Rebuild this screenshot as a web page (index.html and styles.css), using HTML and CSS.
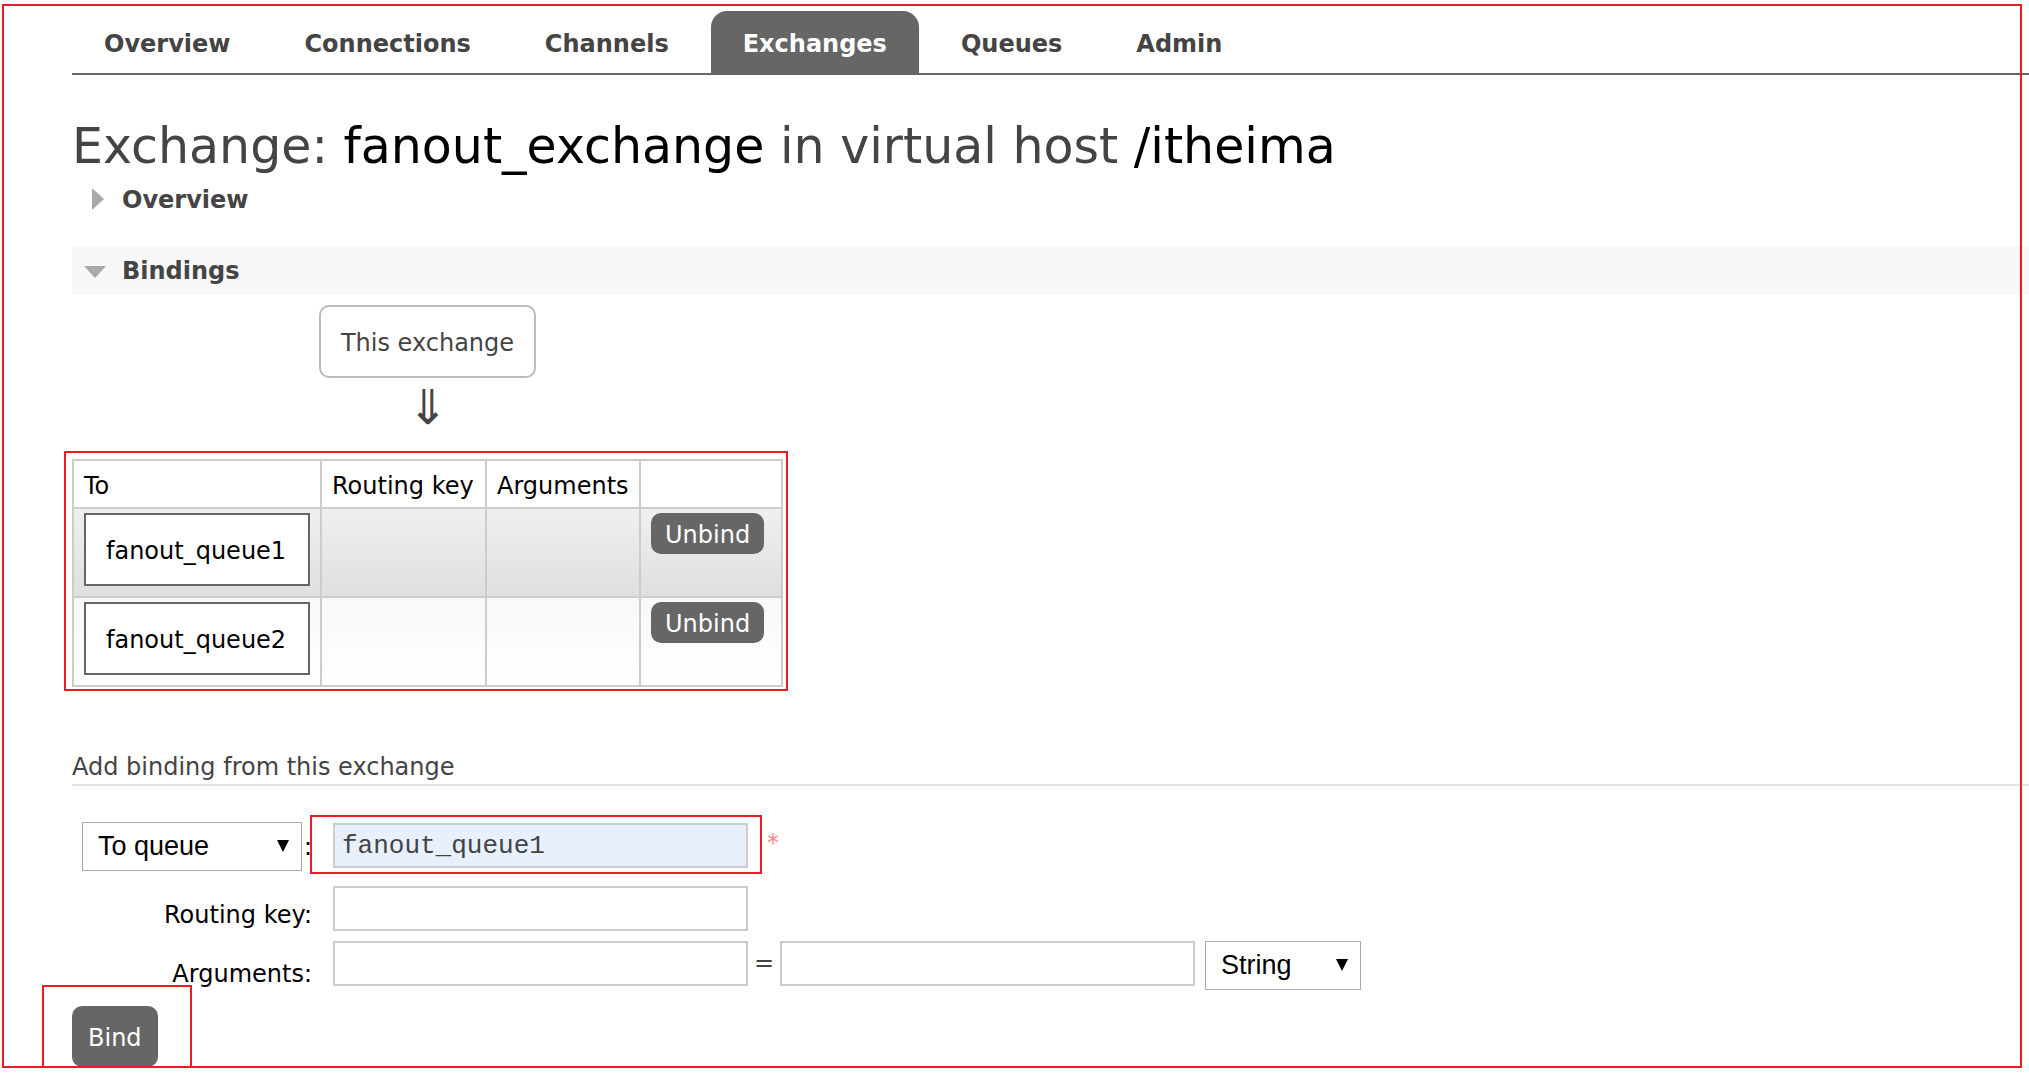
FILE: index.html
```html
<!DOCTYPE html>
<html lang="en">
<head>
<meta charset="utf-8">
<title>Exchange: fanout_exchange</title>
<link rel="stylesheet" href="styles.css">
</head>
<body>
<div class="page">
  <nav class="tabs">
    <a class="tab" href="#overview">Overview</a>
    <a class="tab" href="#connections">Connections</a>
    <a class="tab" href="#channels">Channels</a>
    <a class="tab tab-selected" href="#exchanges">Exchanges</a>
    <a class="tab" href="#queues">Queues</a>
    <a class="tab" href="#admin">Admin</a>
  </nav>
  <main>
    <h1>Exchange: <b>fanout_exchange</b> in virtual host <b>/itheima</b></h1>
    <h2 class="section">
      <svg class="marker" viewBox="0 0 24 24" aria-hidden="true"><path d="M9 0L21 11L9 22Z"/></svg>
      Overview
    </h2>
    <h2 class="section section-open">
      <svg class="marker" viewBox="0 0 24 24" aria-hidden="true"><path d="M1 7H23L12 19Z"/></svg>
      Bindings
    </h2>

    <div class="bindings">
      <span class="exchange">This exchange</span>
      <div class="arrow">⇓</div>
      <div class="marked marked-table">
        <table class="list">
          <thead>
            <tr><th class="col-to">To</th><th class="col-key">Routing key</th><th class="col-args">Arguments</th><th class="col-action"></th></tr>
          </thead>
          <tbody>
            <tr><td><a class="queue" href="#queue1">fanout_queue1</a></td><td></td><td></td><td><button class="button button-small" type="button">Unbind</button></td></tr>
            <tr><td><a class="queue" href="#queue2">fanout_queue2</a></td><td></td><td></td><td><button class="button button-small" type="button">Unbind</button></td></tr>
          </tbody>
        </table>
      </div>
    </div>

    <form class="add">
      <h3>Add binding from this exchange</h3>
      <div class="fields">
        <div class="label label-select">
          <span class="select select-wide"><select aria-label="Destination type"><option>To queue</option><option>To exchange</option></select></span><label for="destination">:</label>
        </div>
        <div class="values">
          <span class="marked marked-input"><input class="text text-filled" id="destination" type="text" value="fanout_queue1"></span>
          <span class="required">*</span>
        </div>

        <label class="label" for="key">Routing key:</label>
        <div class="values"><input class="text" id="key" type="text"></div>

        <label class="label" for="argument">Arguments:</label>
        <div class="values">
          <input class="text" id="argument" type="text">
          <span class="equals">=</span>
          <input class="text" aria-label="Argument value" type="text">
          <span class="select select-type"><select aria-label="Argument type"><option>String</option><option>Number</option><option>Boolean</option><option>List</option></select></span>
        </div>
      </div>
      <span class="marked marked-bind"><button class="button button-large" type="button">Bind</button></span>
    </form>
  </main>
</div>
</body>
</html>
```
FILE: styles.css
```css
* {
  box-sizing: border-box;
}

body {
  margin: 0;
  background: #fff;
  color: #444;
  font: 24px/32px Verdana, "DejaVu Sans", sans-serif;
}

.page {
  position: relative;
  padding: 11px 0 1px 72px;
}

/* Red annotation frames */
.page::after,
.marked::after {
  content: "";
  position: absolute;
  border: 2px solid #ed1c24;
  pointer-events: none;
}

.page::after {
  inset: 4px 7px 0 2px;
}

.marked {
  position: relative;
}

.marked-table::after {
  inset: -8px -5px -4px -8px;
}

.marked-input::after {
  inset: -8px -14px -6px -23px;
}

.marked-bind::after {
  inset: -21px -34px -1px -30px;
}

.tabs {
  display: flex;
  gap: 10px;
  border-bottom: 2px solid #666;
}

.tab {
  padding: 17px 32px 13px;
  border-radius: 16px 16px 0 0;
  color: #444;
  font-weight: bold;
  text-decoration: none;
}

.tab-selected {
  background: #666;
  color: #fff;
}

h1 {
  margin: 44px 0 0;
  font-size: 49px;
  font-weight: normal;
  line-height: 56px;
}

h1 b {
  color: #000;
  font-weight: normal;
}

.section {
  display: flex;
  align-items: center;
  gap: 15px;
  height: 49px;
  margin: 0 0 22px;
  padding-left: 11px;
  font-size: 24px;
}

.section-open {
  margin-bottom: 10px;
  background: #f8f8f8;
}

.marker {
  width: 24px;
  height: 24px;
  fill: #aaa;
}

.bindings {
  display: inline-flex;
  flex-direction: column;
  align-items: center;
}

.exchange {
  padding: 20px 20px 17px;
  border: 2px solid #bbb;
  border-radius: 10px;
}

.arrow {
  padding: 5px 0 28px;
  font-size: 48px;
  line-height: 48px;
}

.list {
  border-collapse: collapse;
  color: #000;
}

.list th,
.list td {
  padding: 4px 10px;
  border: 2px solid #ccc;
  text-align: left;
  vertical-align: top;
}

.list th {
  padding: 9px 10px 5px;
  font-weight: normal;
}

.list td {
  height: 89px;
}

.list tbody tr {
  background: linear-gradient(#f0f0f0, #dfdfdf);
}

.list tbody tr:nth-child(even) {
  background: linear-gradient(#f8f8f8, #fff);
}

.col-to {
  width: 248px;
}

.col-key {
  width: 165px;
}

.col-args {
  width: 154px;
}

.col-action {
  width: 142px;
}

.queue {
  display: block;
  padding: 20px 20px 17px;
  border: 2px solid #666;
  background: #fff;
  color: #000;
  text-decoration: none;
}

.button {
  display: block;
  border: 0;
  border-radius: 10px;
  background: #666;
  color: #fff;
  font: inherit;
}

.button-small {
  padding: 6px 14px 3px;
}

.button-large {
  padding: 16px 16px 13px;
}

h3 {
  margin: 64px 0 36px;
  padding-bottom: 1px;
  border-bottom: 2px solid #e4e4e4;
  font-size: 24px;
  font-weight: normal;
}

.fields {
  display: grid;
  grid-template-columns: 230px 1fr;
  gap: 10px 21px;
  padding-left: 10px;
}

.label {
  align-self: end;
  color: #000;
  text-align: right;
}

.label-select {
  display: flex;
  align-items: center;
  justify-content: space-between;
  padding-bottom: 5px;
}

.values {
  display: flex;
  align-items: flex-start;
}

.marked-input {
  margin-top: 1px;
}

.text {
  display: block;
  width: 415px;
  height: 45px;
  padding: 0 7px;
  border: 2px solid #ccc;
  background: #fff;
  color: #444;
  font: 26px "Courier New", "Liberation Mono", monospace;
}

.text-filled {
  background: #e8f0fe;
}

.required {
  padding: 5px 0 0 19px;
  color: #f88;
}

.equals {
  width: 32px;
  padding-top: 6px;
  text-align: center;
}

.select {
  position: relative;
}

.select::after {
  content: "";
  position: absolute;
  top: 18px;
  right: 13px;
  width: 12px;
  height: 12px;
  background: #000;
  clip-path: polygon(0 0, 100% 0, 50% 100%);
  pointer-events: none;
}

.select select {
  display: block;
  width: 100%;
  height: 49px;
  padding: 0 15px 2px;
  border: 1px solid #a9a9a9;
  border-radius: 0;
  appearance: none;
  background: #fff;
  color: #000;
  font: 27px Arial, "Liberation Sans", sans-serif;
}

.select-wide {
  width: 220px;
}

.select-type {
  width: 156px;
  margin-left: 10px;
}

.marked-bind {
  display: block;
  width: fit-content;
  margin-top: 16px;
}
```
